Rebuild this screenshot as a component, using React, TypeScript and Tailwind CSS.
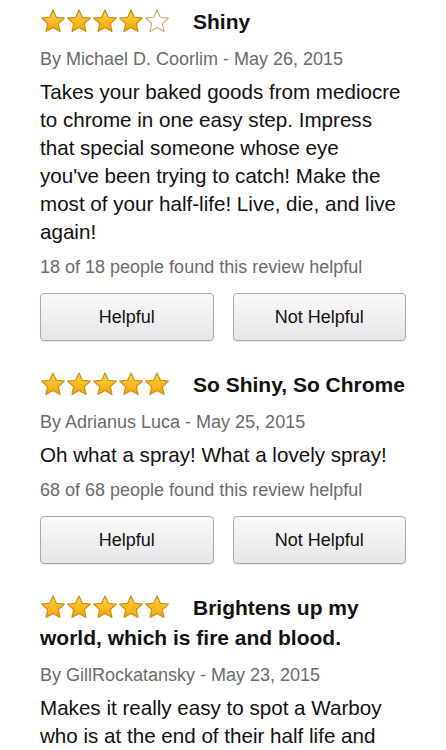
import { useId } from "react";

type ReviewData = {
  rating: number;
  title: string;
  author: string;
  date: string;
  body: string;
  helpful?: string;
};

const REVIEWS: ReviewData[] = [
  {
    rating: 4,
    title: "Shiny",
    author: "Michael D. Coorlim",
    date: "May 26, 2015",
    body: "Takes your baked goods from mediocre to chrome in one easy step. Impress that special someone whose eye you've\u00a0been trying to catch! Make the most of your half-life! Live, die, and live again!",
    helpful: "18 of 18",
  },
  {
    rating: 5,
    title: "So Shiny, So Chrome",
    author: "Adrianus Luca",
    date: "May 25, 2015",
    body: "Oh what a spray! What a lovely spray!",
    helpful: "68 of 68",
  },
  {
    rating: 5,
    title: "Brightens up my world, which is fire and blood.",
    author: "GillRockatansky",
    date: "May 23, 2015",
    // rest of this one is below the fold
    body: "Makes it really easy to spot a Warboy who is at the end of their half life and",
  },
];

function Star({ filled }: { filled: boolean }) {
  const id = useId();
  return (
    <svg width="26" height="24" viewBox="0 0 26 24" className="block">
      <defs>
        <linearGradient id={id} x1="0" y1="0" x2="0" y2="1">
          <stop offset="0" stopColor="#ffd64a" />
          <stop offset="1" stopColor="#f3a200" />
        </linearGradient>
      </defs>
      <polygon
        points="13,1 16.4,8.2 24.4,9.1 18.4,14.5 20,22.6 13,18.6 6,22.6 7.6,14.5 1.6,9.1 9.6,8.2"
        fill={filled ? `url(#${id})` : "#ffffff"}
        stroke={filled ? "#c98b12" : "#c8ab74"}
        strokeWidth="1.1"
        strokeLinejoin="round"
      />
    </svg>
  );
}

function Review({ r }: { r: ReviewData }) {
  return (
    <div className="flex flex-col">
      <h3 className="text-[21px] font-bold leading-[30px] text-[#111]">
        <span className="inline-flex align-[-4px] mr-[23px]">
          {[0, 1, 2, 3, 4].map(i => <Star key={i} filled={i < r.rating} />)}
        </span>
        {r.title}
      </h3>
      <p className="mt-[10px] text-[18px] leading-[24px] text-[#6b6b6b]">
        By {r.author} - {r.date}
      </p>
      <p className="mt-[7px] text-[20.6px] leading-[28px] text-[#111]">{r.body}</p>
      {r.helpful && (
        <>
          <p className="mt-[9px] text-[18px] leading-[24px] text-[#6b6b6b]">
            {r.helpful} people found this review helpful
          </p>
          <div className="mt-[14px] grid grid-cols-2 gap-[19px]">
            {["Helpful", "Not Helpful"].map(label => (
              <button
                key={label}
                className="h-[48px] rounded-[4px] border border-[#a9a9ab] bg-gradient-to-b from-[#fafafb] to-[#e5e6e8] text-[18px] text-[#111] shadow-[0_1px_1px_rgba(0,0,0,0.08)]"
              >
                {label}
              </button>
            ))}
          </div>
        </>
      )}
    </div>
  );
}

export default function App() {
  return (
    <div className="h-[750px] overflow-hidden bg-white font-['Liberation_Sans',Arial,sans-serif]">
      <div className="px-[40px] pt-[7px] flex flex-col gap-[29px]">
        {REVIEWS.map(r => <Review key={r.title} r={r} />)}
      </div>
    </div>
  );
}
